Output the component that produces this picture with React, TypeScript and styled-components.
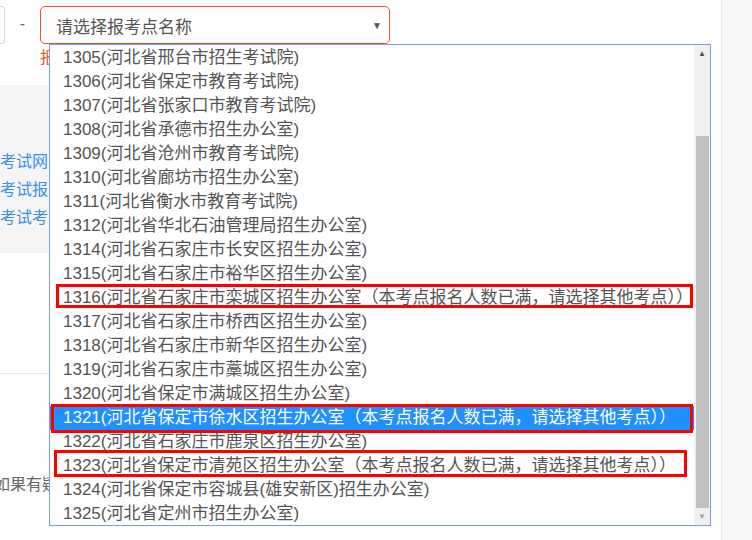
import * as React from 'react';
import styled, { createGlobalStyle } from 'styled-components';

const GlobalStyle = createGlobalStyle`
  html, body {
    margin: 0;
    padding: 0;
    background: #fff;
    font-family: "Liberation Sans", "Noto Sans CJK SC", sans-serif;
  }
`;

type Option = {
  code: string;
  name: string;
  full?: boolean;
  active?: boolean;
  mark?: { left: number; width: number; top: number; height: number };
};

const FULL = '（本考点报名人数已满，请选择其他考点））';

const options: Option[] = [
  { code: '1305', name: '河北省邢台市招生考试院' },
  { code: '1306', name: '河北省保定市教育考试院' },
  { code: '1307', name: '河北省张家口市教育考试院' },
  { code: '1308', name: '河北省承德市招生办公室' },
  { code: '1309', name: '河北省沧州市教育考试院' },
  { code: '1310', name: '河北省廊坊市招生办公室' },
  { code: '1311', name: '河北省衡水市教育考试院' },
  { code: '1312', name: '河北省华北石油管理局招生办公室' },
  { code: '1314', name: '河北省石家庄市长安区招生办公室' },
  { code: '1315', name: '河北省石家庄市裕华区招生办公室' },
  {
    code: '1316',
    name: '河北省石家庄市栾城区招生办公室',
    full: true,
    mark: { left: 6, width: 637, top: -2, height: 24 },
  },
  { code: '1317', name: '河北省石家庄市桥西区招生办公室' },
  { code: '1318', name: '河北省石家庄市新华区招生办公室' },
  { code: '1319', name: '河北省石家庄市藁城区招生办公室' },
  { code: '1320', name: '河北省保定市满城区招生办公室' },
  {
    code: '1321',
    name: '河北省保定市徐水区招生办公室',
    full: true,
    active: true,
    mark: { left: 1, width: 642, top: -2, height: 29 },
  },
  { code: '1322', name: '河北省石家庄市鹿泉区招生办公室' },
  {
    code: '1323',
    name: '河北省保定市清苑区招生办公室',
    full: true,
    mark: { left: 4, width: 633, top: -4, height: 27 },
  },
  { code: '1324', name: '河北省保定市容城县(雄安新区)招生办公室' },
  { code: '1325', name: '河北省定州市招生办公室' },
];

export default function App() {
  return (
    <>
      <GlobalStyle />
      <Page>
        <Main>
          <FormRow>
            <Stub />
            <Dash>-</Dash>
            <SelectWrap>
              <SelectBox>
                <Placeholder>请选择报考点名称</Placeholder>
                <Caret>▼</Caret>
              </SelectBox>
              <ListBox>
                <Options>
                  {options.map((o) => (
                    <Row key={o.code} $active={!!o.active}>
                      {o.code}({o.name}
                      {o.full ? FULL : ')'}
                      {o.mark ? (
                        <Mark
                          $left={o.mark.left}
                          $width={o.mark.width}
                          $top={o.mark.top}
                          $height={o.mark.height}
                        />
                      ) : null}
                    </Row>
                  ))}
                </Options>
                <ScrollBar>
                  <Arrow $dim={false}>▲</Arrow>
                  <Track>
                    <Thumb />
                  </Track>
                  <Arrow $dim>▼</Arrow>
                </ScrollBar>
              </ListBox>
            </SelectWrap>
          </FormRow>
          <ErrorText>报</ErrorText>
          <InfoPanel>
            <LinkLine>考试网</LinkLine>
            <LinkLine>考试报</LinkLine>
            <LinkLine>考试考</LinkLine>
          </InfoPanel>
          <Divider />
          <Footer>如果有疑</Footer>
        </Main>
        <Side />
      </Page>
    </>
  );
}

const Page = styled.div`
  display: flex;
  width: 752px;
  height: 540px;
  overflow: hidden;
`;

const Main = styled.div`
  width: 721px;
  flex-shrink: 0;
  display: flex;
  flex-direction: column;
`;

const Side = styled.div`
  flex: 1;
  background: #f7f7f7;
  border-left: 1px solid #e8e8e8;
`;

const FormRow = styled.div`
  display: flex;
  align-items: center;
  margin-top: 6px;
  height: 38px;
`;

const Stub = styled.div`
  width: 4px;
  height: 36px;
  border: 1px solid #d6d6d6;
  border-left: none;
  border-radius: 0 4px 4px 0;
`;

const Dash = styled.span`
  width: 35px;
  text-align: center;
  color: #666;
  font-size: 16px;
  margin-top: -2px;
`;

const SelectWrap = styled.div`
  position: relative;
  width: 350px;
  height: 38px;
`;

const SelectBox = styled.div`
  box-sizing: border-box;
  height: 38px;
  display: flex;
  align-items: center;
  justify-content: space-between;
  padding: 0 7px 0 15px;
  border: 1px solid #e4572e;
  border-radius: 5px;
  background: #fff;
`;

const Placeholder = styled.span`
  font-size: 17px;
  color: #555;
`;

const Caret = styled.span`
  font-size: 10px;
  color: #555;
`;

const ListBox = styled.div`
  position: absolute;
  left: 9px;
  top: 38px;
  z-index: 10;
  box-sizing: border-box;
  width: 662px;
  height: 482px;
  border: 1px solid #7b9fdb;
  background: #fff;
  display: flex;
  overflow: hidden;
`;

const Options = styled.div`
  flex: 1;
  padding-top: 1px;
`;

const Row = styled.div<{ $active: boolean }>`
  position: relative;
  height: 24px;
  line-height: 24px;
  padding-left: 13px;
  font-size: 17px;
  white-space: nowrap;
  color: ${(p) => (p.$active ? '#fff' : '#555')};
  background: ${(p) => (p.$active ? '#1e90ff' : 'transparent')};
`;

const Mark = styled.span<{ $left: number; $width: number; $top: number; $height: number }>`
  position: absolute;
  left: ${(p) => p.$left}px;
  top: ${(p) => p.$top}px;
  width: ${(p) => p.$width}px;
  height: ${(p) => p.$height}px;
  box-sizing: border-box;
  border: 3px solid #ff0000;
  pointer-events: none;
`;

const ScrollBar = styled.div`
  width: 16px;
  background: #f0f0f0;
  display: flex;
  flex-direction: column;
`;

const Arrow = styled.div<{ $dim: boolean }>`
  height: 17px;
  display: flex;
  align-items: center;
  justify-content: center;
  font-size: 8px;
  color: ${(p) => (p.$dim ? '#a3a3a3' : '#505050')};
`;

const Track = styled.div`
  flex: 1;
  display: flex;
  flex-direction: column;
  justify-content: flex-end;
  padding: 0 1px 0 2px;
`;

const Thumb = styled.div`
  height: 372px;
  background: #c1c1c1;
`;

const ErrorText = styled.div`
  margin-top: 2px;
  padding-left: 40px;
  line-height: 24px;
  font-size: 16px;
  color: #e4572e;
`;

const InfoPanel = styled.div`
  margin-top: 15px;
  width: 620px;
  height: 168px;
  box-sizing: border-box;
  padding-top: 63px;
  background: #f5f5f5;
`;

const LinkLine = styled.div`
  line-height: 28px;
  font-size: 16px;
  color: #3b8fe6;
`;

const Divider = styled.div`
  margin-top: 120px;
  width: 620px;
  height: 1px;
  background: #e6e6e6;
`;

const Footer = styled.div`
  margin-top: 99px;
  margin-left: -6px;
  line-height: 24px;
  font-size: 16px;
  color: #666;
`;
